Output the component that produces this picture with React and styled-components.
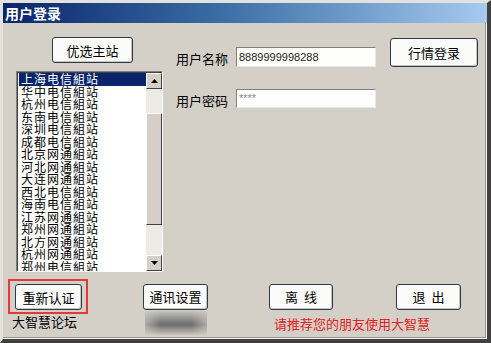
import styled, { createGlobalStyle } from 'styled-components'

const GlobalStyle = createGlobalStyle`
    html, body {
        margin: 0;
        padding: 0;
        background: #d4d0c8;
    }
    * {
        box-sizing: border-box;
    }
`

const stations = [
    '上海电信組站', '华中电信組站', '杭州电信組站', '东南电信組站', '深圳电信組站',
    '成都电信組站', '北京网通組站', '河北网通組站', '大连网通組站', '西北电信組站',
    '海南电信組站', '江苏网通組站', '郑州网通組站', '北方网通組站', '杭州网通組站',
    '郑州电信組站',
]

const font = `"Noto Sans CJK SC", "Liberation Sans", sans-serif`

function App() {
    return (
        <>
            <GlobalStyle />
            <Window>
                <TitleBar>用户登录</TitleBar>
                <Body>
                    <TopArea>
                        <LeftColumn>
                            <Button $w={81} $h={26} $ml={36}>优选主站</Button>
                            <ListBox>
                                <ListItems>
                                    {stations.map((s, i) => (
                                        <ListItem key={i} $selected={i === 0}>{s}</ListItem>
                                    ))}
                                </ListItems>
                                <ScrollBar>
                                    <ScrollArrow>
                                        <svg width="7" height="4" viewBox="0 0 7 4"><path d="M3.5 0L7 4H0z" fill="#000" /></svg>
                                    </ScrollArrow>
                                    <ScrollTrack>
                                        <ScrollThumb />
                                    </ScrollTrack>
                                    <ScrollArrow>
                                        <svg width="7" height="4" viewBox="0 0 7 4"><path d="M0 0H7L3.5 4z" fill="#000" /></svg>
                                    </ScrollArrow>
                                </ScrollBar>
                            </ListBox>
                        </LeftColumn>
                        <FormColumn>
                            <FieldRow $mt={23}>
                                <Label>用户名称</Label>
                                <Input $h={20}>8889999998288</Input>
                            </FieldRow>
                            <FieldRow $mt={21}>
                                <Label>用户密码</Label>
                                <Input $h={19} $muted>****</Input>
                            </FieldRow>
                        </FormColumn>
                        <RightColumn>
                            <Button $w={88} $h={29}>行情登录</Button>
                        </RightColumn>
                    </TopArea>
                    <BottomRow>
                        <Highlight>
                            <Button $w={67} $h={26}>重新认证</Button>
                        </Highlight>
                        <Button $w={65} $h={26} $ml={55}>通讯设置</Button>
                        <Button $w={64} $h={26} $ml={61}>离&nbsp;&nbsp;线</Button>
                        <Button $w={65} $h={26} $ml={63}>退&nbsp;&nbsp;出</Button>
                    </BottomRow>
                    <FooterRow>
                        <ForumText>大智慧论坛</ForumText>
                        <Smudge />
                        <Promo>请推荐您的朋友使用大智慧</Promo>
                    </FooterRow>
                </Body>
            </Window>
        </>
    )
}

export default App

const Window = styled.div`
    width: 491px;
    height: 343px;
    background: #d4d0c8;
    border-top: 3px solid #e4e2dc;
    border-left: 3px solid #e4e2dc;
    border-right: 4px solid #404040;
    border-bottom: 4px solid #404040;
    box-shadow: inset -1px -1px 0 #f4f4f0, inset -2px -2px 0 #9a968e;
    display: flex;
    flex-direction: column;
    overflow: hidden;
`

const TitleBar = styled.div`
    height: 20px;
    flex: none;
    background: linear-gradient(to right, #0a246a, #3a6ea5 45%, #a6caf0);
    color: #fff;
    font-family: ${font};
    font-weight: bold;
    font-size: 14px;
    line-height: 20px;
    padding-left: 2px;
`

const Body = styled.div`
    flex: 1;
    display: flex;
    flex-direction: column;
`

const TopArea = styled.div`
    display: flex;
    height: 240px;
`

const LeftColumn = styled.div`
    width: 160px;
    padding-left: 13px;
    padding-top: 14px;
    display: flex;
    flex-direction: column;
`

const Button = styled.div`
    width: ${p => p.$w}px;
    height: ${p => p.$h}px;
    margin-left: ${p => p.$ml || 0}px;
    flex: none;
    display: flex;
    align-items: center;
    justify-content: center;
    background: #fbfbf9;
    border: 1px solid #2c3a4c;
    border-radius: 3px;
    box-shadow: inset -1px -1px 0 #c8c6c0;
    font-family: ${font};
    font-size: 13px;
    color: #000;
`

const ListBox = styled.div`
    margin-top: 8px;
    width: 147px;
    height: 201px;
    display: flex;
    background: #fff;
    border-top: 1px solid #808080;
    border-left: 1px solid #808080;
    border-right: 1px solid #fff;
    border-bottom: 1px solid #fff;
    box-shadow: inset 1px 1px 0 #404040;
    padding: 1px 0 0 1px;
`

const ListItems = styled.div`
    flex: 1;
    overflow: hidden;
    padding-left: 1px;
`

const ListItem = styled.div`
    height: 12.5px;
    line-height: 12.5px;
    font-family: ${font};
    font-size: 12px;
    letter-spacing: 1px;
    padding-left: 2px;
    white-space: nowrap;
    color: ${p => (p.$selected ? '#fff' : '#000')};
    background: ${p => (p.$selected ? '#0a246a' : 'transparent')};
`

const ScrollBar = styled.div`
    width: 16px;
    display: flex;
    flex-direction: column;
    background: #ecebe6;
`

const ScrollArrow = styled.div`
    height: 16px;
    flex: none;
    display: flex;
    align-items: center;
    justify-content: center;
    background: #d4d0c8;
    border-top: 1px solid #fff;
    border-left: 1px solid #fff;
    border-right: 1px solid #404040;
    border-bottom: 1px solid #404040;
`

const ScrollTrack = styled.div`
    flex: 1;
    padding-top: 24px;
    padding-bottom: 30px;
    display: flex;
`

const ScrollThumb = styled.div`
    flex: 1;
    background: #d4d0c8;
    border-top: 1px solid #fff;
    border-left: 1px solid #fff;
    border-right: 1px solid #404040;
    border-bottom: 1px solid #404040;
`

const FormColumn = styled.div`
    width: 214px;
    margin-left: 13px;
    display: flex;
    flex-direction: column;
`

const FieldRow = styled.div`
    display: flex;
    align-items: center;
    margin-top: ${p => p.$mt}px;
`

const Label = styled.div`
    width: 60px;
    font-family: ${font};
    font-size: 13px;
    line-height: 16px;
    color: #000;
    padding-top: 5px;
`

const Input = styled.div`
    width: 140px;
    height: ${p => p.$h}px;
    background: #fefefc;
    border-top: 1px solid #808080;
    border-left: 1px solid #808080;
    border-right: 1px solid #e8e8e8;
    border-bottom: 1px solid #e8e8e8;
    font-family: "Liberation Sans", sans-serif;
    font-size: 11px;
    line-height: ${p => p.$h - 2}px;
    padding-left: 2px;
    color: ${p => (p.$muted ? '#8a8a8a' : '#222')};
`

const RightColumn = styled.div`
    padding-top: 15px;
`

const BottomRow = styled.div`
    display: flex;
    align-items: center;
    padding-left: 5px;
    margin-top: 16px;
`

const Highlight = styled.div`
    border: 2px solid #e23a3a;
    padding: 3px 4px 2px 5px;
`

const FooterRow = styled.div`
    display: flex;
    align-items: flex-start;
    padding-left: 9px;
`

const ForumText = styled.div`
    font-family: ${font};
    font-size: 13px;
    line-height: 16px;
    color: #000;
    width: 133px;
`

const Smudge = styled.div`
    width: 62px;
    height: 25px;
    margin-top: -3px;
    background:
        linear-gradient(to right, rgba(212,208,200,0.6), rgba(212,208,200,0) 25%, rgba(212,208,200,0) 75%, rgba(212,208,200,0.6)),
        linear-gradient(to bottom, #c4c1ba, #8a8a8a 35%, #6e6e6e 55%, #a4a29e 80%, #d4d0c8);
`

const Promo = styled.div`
    margin-left: 67px;
    margin-top: 3px;
    font-family: ${font};
    font-size: 13px;
    line-height: 14px;
    color: #e02020;
`
